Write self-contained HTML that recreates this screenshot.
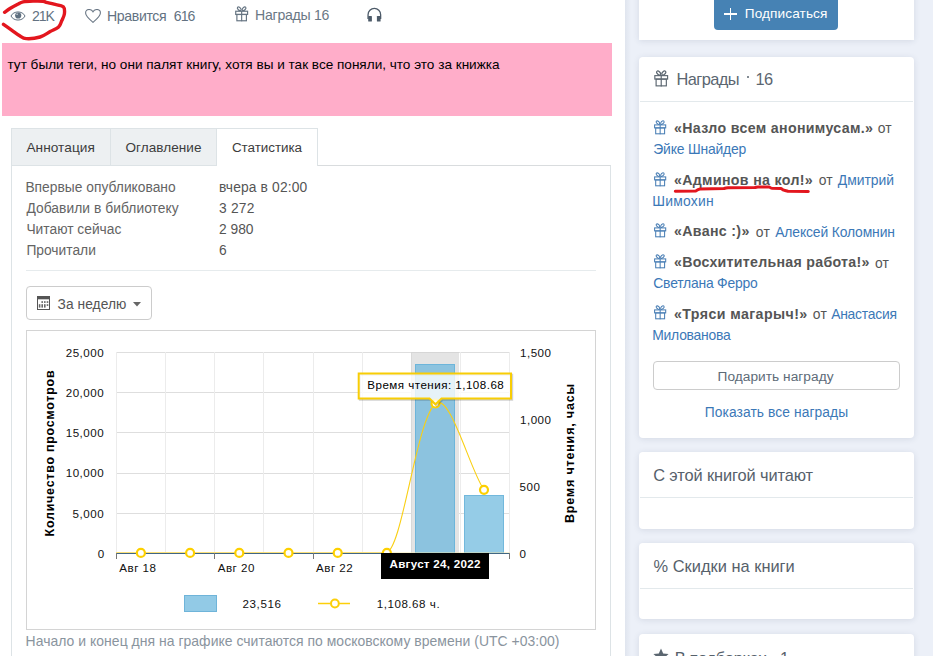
<!DOCTYPE html>
<html><head><meta charset="utf-8"><style>
html,body{margin:0;padding:0;width:933px;height:656px;overflow:hidden;background:#fff;position:relative}
.t{position:absolute;white-space:nowrap;font-family:"Liberation Sans", sans-serif}
body{font-family:"Liberation Sans", sans-serif}
</style></head><body>
<div style="position:absolute;left:625px;top:0px;width:308px;height:656px;background:#ecf0f8;"></div>
<div style="position:absolute;left:625px;top:0px;width:6px;height:656px;background:linear-gradient(to right,rgba(60,80,110,0.07),rgba(60,80,110,0));"></div>
<div style="position:absolute;left:639px;top:-10px;width:275px;height:50px;background:#fff;box-shadow:0 1px 6px rgba(40,60,90,0.12);"></div>
<div style="position:absolute;left:639px;top:57px;width:275px;height:381px;background:#fff;border-radius:4px 4px 4px 4px;box-shadow:0 1px 6px rgba(40,60,90,0.12);"></div>
<div style="position:absolute;left:639px;top:452px;width:275px;height:77px;background:#fff;border-radius:4px 4px 4px 4px;box-shadow:0 1px 6px rgba(40,60,90,0.12);"></div>
<div style="position:absolute;left:639px;top:543px;width:275px;height:76px;background:#fff;border-radius:4px 4px 4px 4px;box-shadow:0 1px 6px rgba(40,60,90,0.12);"></div>
<div style="position:absolute;left:639px;top:634px;width:275px;height:60px;background:#fff;border-radius:4px 4px 4px 4px;box-shadow:0 1px 6px rgba(40,60,90,0.12);"></div>
<div style="position:absolute;left:640px;top:101px;width:273px;height:1px;background:#e3e9ec;"></div>
<div style="position:absolute;left:640px;top:497px;width:273px;height:1px;background:#e3e9ec;"></div>
<div style="position:absolute;left:640px;top:588px;width:273px;height:1px;background:#e3e9ec;"></div>
<div style="position:absolute;left:714px;top:-5px;width:124px;height:35px;background:#4682b4;border-radius:4px;"></div>
<div style="position:absolute;left:724px;top:13.4px;width:12.8px;height:1.6px;background:#fff;"></div>
<div style="position:absolute;left:729.6px;top:8px;width:1.6px;height:12px;background:#fff;"></div>
<div class="t" style="left:744.80px;top:7.18px;font-size:13.6px;line-height:13.6px;color:#fff;letter-spacing:0.112px;">Подписаться</div>
<div class="t" style="left:676.50px;top:71.21px;font-size:16.4px;line-height:16.4px;color:#5b6670;letter-spacing:-0.600px;">Награды</div>
<div style="position:absolute;left:746.5px;top:76px;width:2px;height:2px;background:#5b6670;border-radius:1px;"></div>
<div class="t" style="left:755.50px;top:71.21px;font-size:16.4px;line-height:16.4px;color:#5b6670;letter-spacing:-0.600px;">16</div>
<svg width="14" height="15" viewBox="0 0 14 15" style="position:absolute;left:653px;top:69.6px;overflow:visible;transform-origin:0 0;transform:scale(1.15)" fill="none" stroke="#5b6670" stroke-width="1.0">
<ellipse cx="4.9" cy="2.6" rx="2.1" ry="1.25" transform="rotate(45 4.9 2.6)"/><ellipse cx="9.4" cy="2.6" rx="2.1" ry="1.25" transform="rotate(-45 9.4 2.6)"/>
<rect x="1.6" y="4.9" width="11.1" height="3.0"/><rect x="2.7" y="7.9" width="8.9" height="5.9"/>
<path d="M7.15 4.4V14.3"/></svg>
<svg width="14" height="15" viewBox="0 0 14 15" style="position:absolute;left:653px;top:119.49999999999999px;overflow:visible;transform-origin:0 0;transform:scale(1)" fill="none" stroke="#4a7fb5" stroke-width="1.05">
<ellipse cx="4.9" cy="2.6" rx="2.1" ry="1.25" transform="rotate(45 4.9 2.6)"/><ellipse cx="9.4" cy="2.6" rx="2.1" ry="1.25" transform="rotate(-45 9.4 2.6)"/>
<rect x="1.6" y="4.9" width="11.1" height="3.0"/><rect x="2.7" y="7.9" width="8.9" height="5.9"/>
<path d="M7.15 4.4V14.3"/></svg>
<div class="t" style="left:674.00px;top:121.08px;font-size:14.2px;line-height:14.2px;color:#555;font-weight:700;letter-spacing:0.324px;">«Назло всем анонимусам.»</div>
<div class="t" style="left:877.70px;top:122.23px;font-size:13.9px;line-height:13.9px;color:#555;letter-spacing:0.180px;">от</div>
<div class="t" style="left:653.30px;top:143.03px;font-size:13.9px;line-height:13.9px;color:#3b78b7;letter-spacing:-0.180px;">Эйке Шнайдер</div>
<svg width="14" height="15" viewBox="0 0 14 15" style="position:absolute;left:653px;top:171.60000000000002px;overflow:visible;transform-origin:0 0;transform:scale(1)" fill="none" stroke="#4a7fb5" stroke-width="1.05">
<ellipse cx="4.9" cy="2.6" rx="2.1" ry="1.25" transform="rotate(45 4.9 2.6)"/><ellipse cx="9.4" cy="2.6" rx="2.1" ry="1.25" transform="rotate(-45 9.4 2.6)"/>
<rect x="1.6" y="4.9" width="11.1" height="3.0"/><rect x="2.7" y="7.9" width="8.9" height="5.9"/>
<path d="M7.15 4.4V14.3"/></svg>
<div class="t" style="left:674.00px;top:173.18px;font-size:14.2px;line-height:14.2px;color:#555;font-weight:700;letter-spacing:0.324px;">«Админов на кол!»</div>
<div class="t" style="left:818.70px;top:174.33px;font-size:13.9px;line-height:13.9px;color:#555;letter-spacing:0.180px;">от</div>
<div class="t" style="left:837.80px;top:174.33px;font-size:13.9px;line-height:13.9px;color:#3b78b7;letter-spacing:-0.010px;">Дмитрий</div>
<div class="t" style="left:652.30px;top:195.13px;font-size:13.9px;line-height:13.9px;color:#3b78b7;letter-spacing:0.214px;">Шимохин</div>
<svg width="14" height="15" viewBox="0 0 14 15" style="position:absolute;left:653px;top:222.8px;overflow:visible;transform-origin:0 0;transform:scale(1)" fill="none" stroke="#4a7fb5" stroke-width="1.05">
<ellipse cx="4.9" cy="2.6" rx="2.1" ry="1.25" transform="rotate(45 4.9 2.6)"/><ellipse cx="9.4" cy="2.6" rx="2.1" ry="1.25" transform="rotate(-45 9.4 2.6)"/>
<rect x="1.6" y="4.9" width="11.1" height="3.0"/><rect x="2.7" y="7.9" width="8.9" height="5.9"/>
<path d="M7.15 4.4V14.3"/></svg>
<div class="t" style="left:674.00px;top:224.38px;font-size:14.2px;line-height:14.2px;color:#555;font-weight:700;letter-spacing:0.332px;">«Аванс :)»</div>
<div class="t" style="left:755.80px;top:225.53px;font-size:13.9px;line-height:13.9px;color:#555;letter-spacing:0.180px;">от</div>
<div class="t" style="left:775.20px;top:225.53px;font-size:13.9px;line-height:13.9px;color:#3b78b7;letter-spacing:-0.133px;">Алексей Коломнин</div>
<svg width="14" height="15" viewBox="0 0 14 15" style="position:absolute;left:653px;top:253.8px;overflow:visible;transform-origin:0 0;transform:scale(1)" fill="none" stroke="#4a7fb5" stroke-width="1.05">
<ellipse cx="4.9" cy="2.6" rx="2.1" ry="1.25" transform="rotate(45 4.9 2.6)"/><ellipse cx="9.4" cy="2.6" rx="2.1" ry="1.25" transform="rotate(-45 9.4 2.6)"/>
<rect x="1.6" y="4.9" width="11.1" height="3.0"/><rect x="2.7" y="7.9" width="8.9" height="5.9"/>
<path d="M7.15 4.4V14.3"/></svg>
<div class="t" style="left:674.00px;top:255.38px;font-size:14.2px;line-height:14.2px;color:#555;font-weight:700;letter-spacing:0.276px;">«Восхитительная работа!»</div>
<div class="t" style="left:874.90px;top:256.53px;font-size:13.9px;line-height:13.9px;color:#555;letter-spacing:0.180px;">от</div>
<div class="t" style="left:653.30px;top:277.33px;font-size:13.9px;line-height:13.9px;color:#3b78b7;letter-spacing:-0.207px;">Светлана Ферро</div>
<svg width="14" height="15" viewBox="0 0 14 15" style="position:absolute;left:653px;top:305.40000000000003px;overflow:visible;transform-origin:0 0;transform:scale(1)" fill="none" stroke="#4a7fb5" stroke-width="1.05">
<ellipse cx="4.9" cy="2.6" rx="2.1" ry="1.25" transform="rotate(45 4.9 2.6)"/><ellipse cx="9.4" cy="2.6" rx="2.1" ry="1.25" transform="rotate(-45 9.4 2.6)"/>
<rect x="1.6" y="4.9" width="11.1" height="3.0"/><rect x="2.7" y="7.9" width="8.9" height="5.9"/>
<path d="M7.15 4.4V14.3"/></svg>
<div class="t" style="left:674.00px;top:306.98px;font-size:14.2px;line-height:14.2px;color:#555;font-weight:700;letter-spacing:0.415px;">«Тряси магарыч!»</div>
<div class="t" style="left:812.80px;top:308.13px;font-size:13.9px;line-height:13.9px;color:#555;letter-spacing:0.180px;">от</div>
<div class="t" style="left:831.20px;top:308.13px;font-size:13.9px;line-height:13.9px;color:#3b78b7;letter-spacing:-0.255px;">Анастасия</div>
<div class="t" style="left:652.30px;top:328.93px;font-size:13.9px;line-height:13.9px;color:#3b78b7;letter-spacing:-0.254px;">Милованова</div>
<svg style="position:absolute;left:0;top:0" width="933" height="656"><path d="M675.3 191.3 L696 190.9 Q698 189.2 700 189 L724 188.5 Q726 187.8 728 187.7 L755 187.5 Q756 187.1 758 187.1 L769.5 187.1 Q771 188.2 772 188.3 L781 188.4 Q783 190.2 785 190.5 L788 191.3 L808.3 191.5" fill="none" stroke="#e3161e" stroke-width="3" stroke-linecap="round" stroke-linejoin="round"/></svg>
<div style="position:absolute;left:653px;top:361px;width:247px;height:29px;box-sizing:border-box;border:1px solid #ccc;border-radius:4px;background:#fff;"></div>
<div class="t" style="left:717.50px;top:370.20px;font-size:13.7px;line-height:13.7px;color:#5d6b78;letter-spacing:0.041px;">Подарить награду</div>
<div class="t" style="left:704.80px;top:405.92px;font-size:13.8px;line-height:13.8px;color:#3b78b7;letter-spacing:0.085px;">Показать все награды</div>
<div class="t" style="left:653.20px;top:467.11px;font-size:16.4px;line-height:16.4px;color:#56616b;letter-spacing:-0.107px;">С этой книгой читают</div>
<div class="t" style="left:653.60px;top:558.11px;font-size:16.4px;line-height:16.4px;color:#56616b;letter-spacing:0.012px;">% Скидки на книги</div>
<svg style="position:absolute;left:653px;top:648px" width="16" height="16" viewBox="0 0 16 16"><path d="M8 0.5L10.2 5.6 15.6 6 11.5 9.6 12.8 15 8 12.1 3.2 15 4.5 9.6 0.4 6 5.8 5.6Z" fill="#5b6670"/></svg>
<div class="t" style="left:674.70px;top:650.41px;font-size:16.4px;line-height:16.4px;color:#56616b;letter-spacing:-0.315px;">В подборках · 1</div>
<svg style="position:absolute;left:10px;top:10.5px" width="16" height="11" viewBox="0 0 16 11" overflow="visible"><path d="M1 5C3.5 -0.4 12.5 -0.4 15 5C12.5 10.4 3.5 10.4 1 5Z" fill="none" stroke="#5f7080" stroke-width="1"/><circle cx="8.2" cy="4.5" r="3.1" fill="#5f7080"/><circle cx="7.1" cy="3.3" r="0.8" fill="#d5dadf"/></svg>
<div class="t" style="left:32.00px;top:9.16px;font-size:14.1px;line-height:14.1px;color:#637282;letter-spacing:-1.138px;">21K</div>
<svg style="position:absolute;left:85px;top:9px" width="16" height="14" viewBox="0 0 16 14"><path d="M8 13.3C3.8 9.6 0.6 7 0.6 3.9 0.6 1.9 2.1 0.5 4.1 0.5 5.6 0.5 7.2 1.4 8 2.8 8.8 1.4 10.4 0.5 11.9 0.5 13.9 0.5 15.4 1.9 15.4 3.9 15.4 7 12.2 9.6 8 13.3Z" fill="none" stroke="#6a7785" stroke-width="1.1"/></svg>
<div class="t" style="left:107.00px;top:9.16px;font-size:14.1px;line-height:14.1px;color:#637282;letter-spacing:-0.365px;">Нравится</div>
<div class="t" style="left:173.80px;top:9.16px;font-size:14.1px;line-height:14.1px;color:#637282;letter-spacing:-0.938px;">616</div>
<svg width="14" height="15" viewBox="0 0 14 15" style="position:absolute;left:233.9px;top:5.65px;overflow:visible;transform-origin:0 0;transform:scale(1.07)" fill="none" stroke="#667583" stroke-width="1.1">
<ellipse cx="4.9" cy="2.6" rx="2.1" ry="1.25" transform="rotate(45 4.9 2.6)"/><ellipse cx="9.4" cy="2.6" rx="2.1" ry="1.25" transform="rotate(-45 9.4 2.6)"/>
<rect x="1.6" y="4.9" width="11.1" height="3.0"/><rect x="2.7" y="7.9" width="8.9" height="5.9"/>
<path d="M7.15 4.4V14.3"/></svg>
<div class="t" style="left:255.00px;top:8.26px;font-size:14.1px;line-height:14.1px;color:#6a7885;letter-spacing:-0.260px;">Награды 16</div>
<svg style="position:absolute;left:366px;top:7px" width="17" height="16" viewBox="0 0 17 16"><path d="M2.05 12V7.65A6.3 6.3 0 0 1 14.65 7.65V12" fill="none" stroke="#4d5b69" stroke-width="1.3"/><rect x="2.2" y="8.9" width="3.7" height="5.7" rx="0.6" fill="#4d5b69"/><rect x="10.9" y="8.9" width="3.7" height="5.7" rx="0.6" fill="#4d5b69"/></svg>
<svg style="position:absolute;left:0;top:0" width="120" height="60"><path d="M4.60 12.30 C5.50 11.67 7.82 9.85 10.00 8.50 C12.18 7.15 15.52 5.30 17.70 4.20 C19.88 3.10 20.55 2.42 23.10 1.90 C25.65 1.38 29.68 1.22 33.00 1.10 C36.32 0.98 40.78 1.00 43.00 1.20 C45.22 1.40 44.47 1.80 46.30 2.30 C48.13 2.80 51.17 3.45 54.00 4.20 C56.83 4.95 61.57 5.18 63.30 6.80 C65.03 8.42 64.67 11.57 64.40 13.90 C64.13 16.23 62.67 18.62 61.70 20.80 C60.73 22.98 60.52 25.20 58.60 27.00 C56.68 28.80 53.28 29.93 50.20 31.60 C47.12 33.27 44.10 35.83 40.10 37.00 C36.10 38.17 29.67 38.85 26.20 38.60 C22.73 38.35 21.73 36.92 19.30 35.50 C16.87 34.08 14.23 31.97 11.60 30.10 C8.97 28.23 4.85 25.27 3.50 24.30" fill="none" stroke="#e3161e" stroke-width="3.4" stroke-linecap="round" stroke-linejoin="round"/></svg>
<div style="position:absolute;left:2px;top:43px;width:610px;height:73px;background:#ffadc9;"></div>
<div class="t" style="left:7.50px;top:58.30px;font-size:13.58px;line-height:13.58px;color:#000;letter-spacing:-0.007px;">тут были теги, но они палят книгу, хотя вы и так все поняли, что это за книжка</div>
<div style="position:absolute;left:11px;top:165px;width:600px;height:560px;box-sizing:border-box;border:1px solid #dde3e6;border-top:1px solid #d9dcde;background:#fff;"></div>
<div style="position:absolute;left:11px;top:128px;width:100px;height:38px;box-sizing:border-box;background:#edf0f2;border:1px solid #dde3e6;"></div>
<div style="position:absolute;left:110px;top:128px;width:107px;height:38px;box-sizing:border-box;background:#edf0f2;border:1px solid #dde3e6;"></div>
<div style="position:absolute;left:216px;top:128px;width:102px;height:38px;box-sizing:border-box;background:#fff;border:1px solid #dde3e6;border-bottom:none;"></div>
<div class="t" style="left:26.40px;top:140.94px;font-size:13.65px;line-height:13.65px;color:#3c3c3c;letter-spacing:0.067px;">Аннотация</div>
<div class="t" style="left:125.40px;top:141.02px;font-size:13.56px;line-height:13.56px;color:#3c3c3c;letter-spacing:0.068px;">Оглавление</div>
<div class="t" style="left:231.90px;top:141.10px;font-size:13.46px;line-height:13.46px;color:#3c3c3c;letter-spacing:-0.053px;">Статистика</div>
<div class="t" style="left:25.40px;top:180.82px;font-size:13.8px;line-height:13.8px;color:#646464;letter-spacing:0.014px;">Впервые опубликовано</div>
<div class="t" style="left:219.00px;top:180.82px;font-size:13.8px;line-height:13.8px;color:#555;letter-spacing:0.144px;">вчера в 02:00</div>
<div class="t" style="left:26.40px;top:201.72px;font-size:13.8px;line-height:13.8px;color:#646464;letter-spacing:0.057px;">Добавили в библиотеку</div>
<div class="t" style="left:219.00px;top:201.72px;font-size:13.8px;line-height:13.8px;color:#555;letter-spacing:0.212px;">3 272</div>
<div class="t" style="left:26.40px;top:222.62px;font-size:13.8px;line-height:13.8px;color:#646464;">Читают сейчас</div>
<div class="t" style="left:219.00px;top:222.62px;font-size:13.8px;line-height:13.8px;color:#555;">2 980</div>
<div class="t" style="left:26.40px;top:243.52px;font-size:13.8px;line-height:13.8px;color:#646464;">Прочитали</div>
<div class="t" style="left:219.00px;top:243.52px;font-size:13.8px;line-height:13.8px;color:#555;">6</div>
<div style="position:absolute;left:26px;top:270px;width:570px;height:1px;background:#e6ebed;"></div>
<div style="position:absolute;left:26px;top:286px;width:126px;height:34px;box-sizing:border-box;border:1px solid #ccc;border-radius:4px;background:#fff;"></div>
<svg style="position:absolute;left:37px;top:296px" width="13" height="14" viewBox="0 0 13 14"><rect x="0.5" y="0.5" width="12" height="13" fill="none" stroke="#555" stroke-width="1"/><rect x="0" y="0" width="13" height="3.3" fill="#555"/><g fill="#666"><rect x="4.4" y="5.2" width="1.6" height="1.7"/><rect x="7" y="5.2" width="1.6" height="1.7"/><rect x="9.7" y="5.2" width="1.6" height="1.7"/><rect x="1.8" y="8.2" width="1.6" height="3.4"/><rect x="4.4" y="8.2" width="1.6" height="3.4"/><rect x="7" y="8.2" width="1.6" height="3.4"/><rect x="9.7" y="8.2" width="1.6" height="1.7"/></g></svg>
<div class="t" style="left:57.60px;top:297.83px;font-size:13.78px;line-height:13.78px;color:#555;letter-spacing:0.048px;">За неделю</div>
<svg style="position:absolute;left:133px;top:302px" width="8" height="5" viewBox="0 0 8 5"><path d="M0 0H8L4 4.5Z" fill="#666"/></svg>
<div style="position:absolute;left:26px;top:330px;width:570px;height:300px;box-sizing:border-box;border:1px solid #d4d4d4;background:#fff;"></div>
<div class="t" style="left:25.60px;top:634.68px;font-size:13.96px;line-height:13.96px;color:#8a949e;letter-spacing:0.031px;">Начало и конец дня на графике считаются по московскому времени (UTC +03:00)</div>
<svg style="position:absolute;left:0;top:0" width="933" height="656"><rect x="116" y="352" width="394" height="1" fill="#dedede"/><rect x="116" y="392" width="394" height="1" fill="#dedede"/><rect x="116" y="432" width="394" height="1" fill="#dedede"/><rect x="116" y="473" width="394" height="1" fill="#dedede"/><rect x="116" y="513" width="394" height="1" fill="#dedede"/><rect x="116" y="352" width="1" height="201" fill="#ececec"/><rect x="165" y="352" width="1" height="201" fill="#ececec"/><rect x="214" y="352" width="1" height="201" fill="#ececec"/><rect x="263" y="352" width="1" height="201" fill="#ececec"/><rect x="313" y="352" width="1" height="201" fill="#ececec"/><rect x="362" y="352" width="1" height="201" fill="#ececec"/><rect x="411" y="352" width="1" height="201" fill="#ececec"/><rect x="460" y="352" width="1" height="201" fill="#ececec"/><rect x="509" y="352" width="1" height="201" fill="#ececec"/><rect x="411" y="352" width="48" height="201" fill="#e4e4e4"/><rect x="411" y="352" width="1" height="201" fill="#d9d9d9"/><rect x="411" y="352" width="48" height="1" fill="#d6d6d6"/><rect x="415.5" y="364.5" width="39" height="188.5" fill="#8cc3df" stroke="#6db5da" stroke-width="1"/><rect x="464.5" y="495.5" width="39" height="57.5" fill="#95cce7" stroke="#72b8dc" stroke-width="1"/><rect x="116" y="553" width="394" height="1" fill="#3f6684"/><rect x="116" y="553" width="1" height="6" fill="#777"/><rect x="214" y="553" width="1" height="6" fill="#777"/><rect x="313" y="553" width="1" height="6" fill="#777"/><rect x="411" y="553" width="1" height="6" fill="#777"/><rect x="509" y="553" width="1" height="6" fill="#777"/><rect x="116" y="552" width="270" height="1" fill="#fbe07a"/><rect x="386" y="552" width="124" height="1" fill="#f3e7b0" opacity="0.5"/><path d="M386 552.5 C402 552 416 420 435.5 403.5 C450 392 470 470 484 489.8" fill="none" stroke="#f9cf14" stroke-width="1.1"/><circle cx="140.9" cy="552.9" r="4" fill="#fff" stroke="#fdd000" stroke-width="2.2"/><circle cx="190.1" cy="552.9" r="4" fill="#fff" stroke="#fdd000" stroke-width="2.2"/><circle cx="239.3" cy="552.9" r="4" fill="#fff" stroke="#fdd000" stroke-width="2.2"/><circle cx="288.5" cy="552.9" r="4" fill="#fff" stroke="#fdd000" stroke-width="2.2"/><circle cx="337.7" cy="552.9" r="4" fill="#fff" stroke="#fdd000" stroke-width="2.2"/><circle cx="386.9" cy="552.9" r="4" fill="#fff" stroke="#fdd000" stroke-width="2.2"/><circle cx="435.5" cy="403.5" r="4" fill="#fff" stroke="#fdd000" stroke-width="2.2"/><circle cx="484.0" cy="489.8" r="4" fill="#fff" stroke="#fdd000" stroke-width="2.2"/></svg>
<div class="t" style="left:65.70px;top:346.88px;font-size:11.6px;line-height:11.6px;color:#111;letter-spacing:0.497px;">25,000</div>
<div class="t" style="left:65.70px;top:387.04px;font-size:11.6px;line-height:11.6px;color:#111;letter-spacing:0.497px;">20,000</div>
<div class="t" style="left:65.70px;top:427.20px;font-size:11.6px;line-height:11.6px;color:#111;letter-spacing:0.497px;">15,000</div>
<div class="t" style="left:65.70px;top:467.36px;font-size:11.6px;line-height:11.6px;color:#111;letter-spacing:0.497px;">10,000</div>
<div class="t" style="left:72.40px;top:507.52px;font-size:11.6px;line-height:11.6px;color:#111;letter-spacing:0.559px;">5,000</div>
<div class="t" style="left:97.70px;top:547.68px;font-size:11.6px;line-height:11.6px;color:#111;letter-spacing:-0.500px;">0</div>
<div class="t" style="left:520.00px;top:346.88px;font-size:11.6px;line-height:11.6px;color:#111;letter-spacing:0.484px;">1,500</div>
<div class="t" style="left:520.00px;top:413.81px;font-size:11.6px;line-height:11.6px;color:#111;letter-spacing:0.484px;">1,000</div>
<div class="t" style="left:519.50px;top:480.74px;font-size:11.6px;line-height:11.6px;color:#111;letter-spacing:0.602px;">500</div>
<div class="t" style="left:519.50px;top:547.68px;font-size:11.6px;line-height:11.6px;color:#111;letter-spacing:-0.500px;">0</div>
<div class="t" style="left:119.30px;top:561.68px;font-size:11.6px;line-height:11.6px;color:#111;letter-spacing:0.482px;">Авг 18</div>
<div class="t" style="left:217.70px;top:561.68px;font-size:11.6px;line-height:11.6px;color:#111;letter-spacing:0.482px;">Авг 20</div>
<div class="t" style="left:316.10px;top:561.68px;font-size:11.6px;line-height:11.6px;color:#111;letter-spacing:0.482px;">Авг 22</div>
<div class="t" style="left:49.85px;top:453.1px;font-size:12.5px;line-height:12.5px;letter-spacing:0.73px;font-weight:700;color:#000;transform:translate(-50%,-50%) rotate(-90deg);white-space:nowrap">Количество просмотров</div>
<div class="t" style="left:569.75px;top:452.9px;font-size:12.5px;line-height:12.5px;letter-spacing:0.83px;font-weight:700;color:#000;transform:translate(-50%,-50%) rotate(-90deg);white-space:nowrap">Время чтения, часы</div>
<div style="position:absolute;left:184px;top:595px;width:33px;height:17px;box-sizing:border-box;background:#92cae6;border:1px solid #6fb4d9;"></div>
<div class="t" style="left:242.50px;top:597.68px;font-size:11.6px;line-height:11.6px;color:#111;letter-spacing:0.597px;">23,516</div>
<svg style="position:absolute;left:318px;top:597px" width="33" height="13"><line x1="0" x2="32" y1="6.5" y2="6.5" stroke="#fccf0a" stroke-width="1.5"/><circle cx="16.9" cy="6.5" r="3.9" fill="#fff" stroke="#fccf0a" stroke-width="2"/></svg>
<div class="t" style="left:376.70px;top:598.38px;font-size:11.6px;line-height:11.6px;color:#111;letter-spacing:0.531px;">1,108.68 ч.</div>
<svg style="position:absolute;left:0;top:0" width="933" height="656"><path d="M358.7 373.6H511V398.5H441.5L435.5 404.3L429.5 398.5H358.7Z" transform="translate(1.2 1.2)" fill="none" stroke="rgba(0,0,0,0.18)" stroke-width="2"/><path d="M358.7 373.6H511V398.5H441.5L435.5 404.3L429.5 398.5H358.7Z" fill="rgba(255,255,255,0.78)" stroke="#f8cd05" stroke-width="2" stroke-linejoin="miter"/></svg>
<div class="t" style="left:367.30px;top:378.68px;font-size:11.6px;line-height:11.6px;color:#000;letter-spacing:0.474px;">Время чтения: 1,108.68</div>
<div style="position:absolute;left:381px;top:553px;width:108px;height:26px;background:#000;"></div>
<div class="t" style="left:389.50px;top:557.68px;font-size:11.6px;line-height:11.6px;color:#fff;font-weight:700;letter-spacing:0.285px;">Август 24, 2022</div>
</body></html>
